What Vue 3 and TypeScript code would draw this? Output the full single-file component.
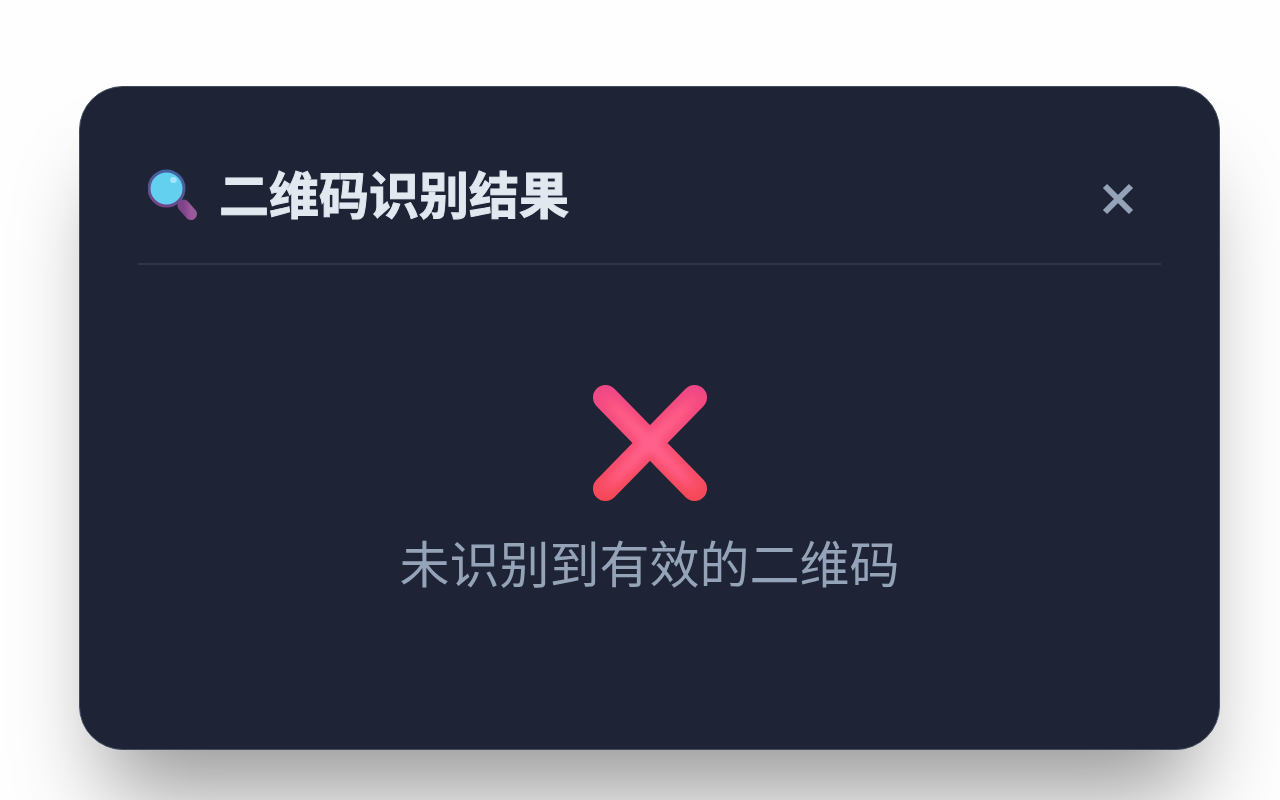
<script setup lang="ts">
import { ref } from 'vue'

const open = ref<boolean>(true)
const title = '二维码识别结果'
const message = '未识别到有效的二维码'
</script>

<template>
  <main class="page">
    <section v-if="open" class="card" role="dialog" aria-labelledby="dialog-title">
      <header class="header">
        <svg class="lens" viewBox="0 0 50 52" aria-hidden="true">
          <defs>
            <linearGradient id="rim" x1="0.7" y1="0" x2="0.3" y2="1">
              <stop offset="0" stop-color="#3e64a4" />
              <stop offset="1" stop-color="#754487" />
            </linearGradient>
            <linearGradient id="handle" x1="0" y1="0" x2="1" y2="0">
              <stop offset="0" stop-color="#7d4488" />
              <stop offset="0.5" stop-color="#8f4b94" />
              <stop offset="1" stop-color="#985a9a" />
            </linearGradient>
          </defs>
          <path d="M29 30L36 37" stroke="#754487" stroke-width="6" />
          <path d="M35.5 36.5L43 45" stroke="url(#handle)" stroke-width="12" stroke-linecap="round" />
          <circle cx="18.5" cy="19.5" r="17.5" fill="#62d0ee" stroke="url(#rim)" stroke-width="3" />
          <ellipse cx="25.5" cy="11" rx="3.4" ry="3" fill="#a5e6fa" />
        </svg>
        <h1 id="dialog-title" class="title">{{ title }}</h1>
        <button class="close" type="button" aria-label="关闭" @click="open = false">
          <svg class="close-icon" viewBox="0 0 32 32" aria-hidden="true">
            <path d="M3 3L29 29M29 3L3 29" stroke="currentColor" stroke-width="6" />
          </svg>
        </button>
      </header>
      <div class="body">
        <svg class="cross" viewBox="0 0 114 116" aria-hidden="true">
          <defs>
            <linearGradient id="edge" x1="0" y1="0" x2="0" y2="116" gradientUnits="userSpaceOnUse">
              <stop offset="0" stop-color="#ef4786" />
              <stop offset="0.5" stop-color="#fb4f78" />
              <stop offset="1" stop-color="#f54855" />
            </linearGradient>
            <radialGradient id="shine" cx="57" cy="58" r="72" gradientUnits="userSpaceOnUse">
              <stop offset="0" stop-color="#ff628e" />
              <stop offset="0.65" stop-color="#ff5e85" stop-opacity="0.8" />
              <stop offset="1" stop-color="#ff5a82" stop-opacity="0" />
            </radialGradient>
            <filter id="soften" x="-20%" y="-20%" width="140%" height="140%">
              <feGaussianBlur stdDeviation="3" />
            </filter>
          </defs>
          <path d="M12.5 12.5L101.5 103.5M101.5 12.5L12.5 103.5" stroke="url(#edge)" stroke-width="25" stroke-linecap="round" />
          <path d="M13 13L101 103M101 13L13 103" stroke="url(#shine)" stroke-width="12" stroke-linecap="round" filter="url(#soften)" />
        </svg>
        <p class="message">{{ message }}</p>
      </div>
    </section>
  </main>
</template>

<style>
body {
  margin: 0;
  background: #fefefe;
}
</style>

<style scoped>
.page {
  box-sizing: border-box;
  min-height: 100vh;
  padding: 86px 60px 48px 79px;
  overflow: hidden;
  font-family: "Noto Sans CJK SC", "Open Sans", sans-serif;
}

.card {
  padding: 58px;
  border: 1px solid #424b5e;
  border-radius: 44px;
  background: #1e2435;
  box-shadow: 0 69px 90px -27px rgba(0, 0, 0, 0.4);
}

.header {
  display: flex;
  align-items: center;
  box-sizing: border-box;
  height: 120px;
  padding: 0 25px 18px 10px;
  border-bottom: 2px solid #2f3547;
}

.lens {
  flex: none;
  width: 50px;
  height: 52px;
  margin-right: 21px;
}

.title {
  flex: 1;
  margin: 0 0 6px;
  color: #e2e8f0;
  font-size: 50px;
  font-weight: 700;
  line-height: 72px;
  -webkit-text-stroke: 1px #e2e8f0;
}

.close {
  display: flex;
  padding: 0;
  margin-top: 8px;
  border: 0;
  background: none;
  color: #94a3b8;
  cursor: pointer;
}

.close-icon {
  width: 36px;
  height: 32px;
}

.body {
  display: flex;
  flex-direction: column;
  align-items: center;
  padding: 120px 0 94px;
}

.cross {
  width: 114px;
  height: 116px;
  fill: none;
}

.message {
  margin: 24px 0 0;
  color: #94a3b8;
  font-size: 50px;
  font-weight: 400;
  line-height: 72px;
}
</style>
